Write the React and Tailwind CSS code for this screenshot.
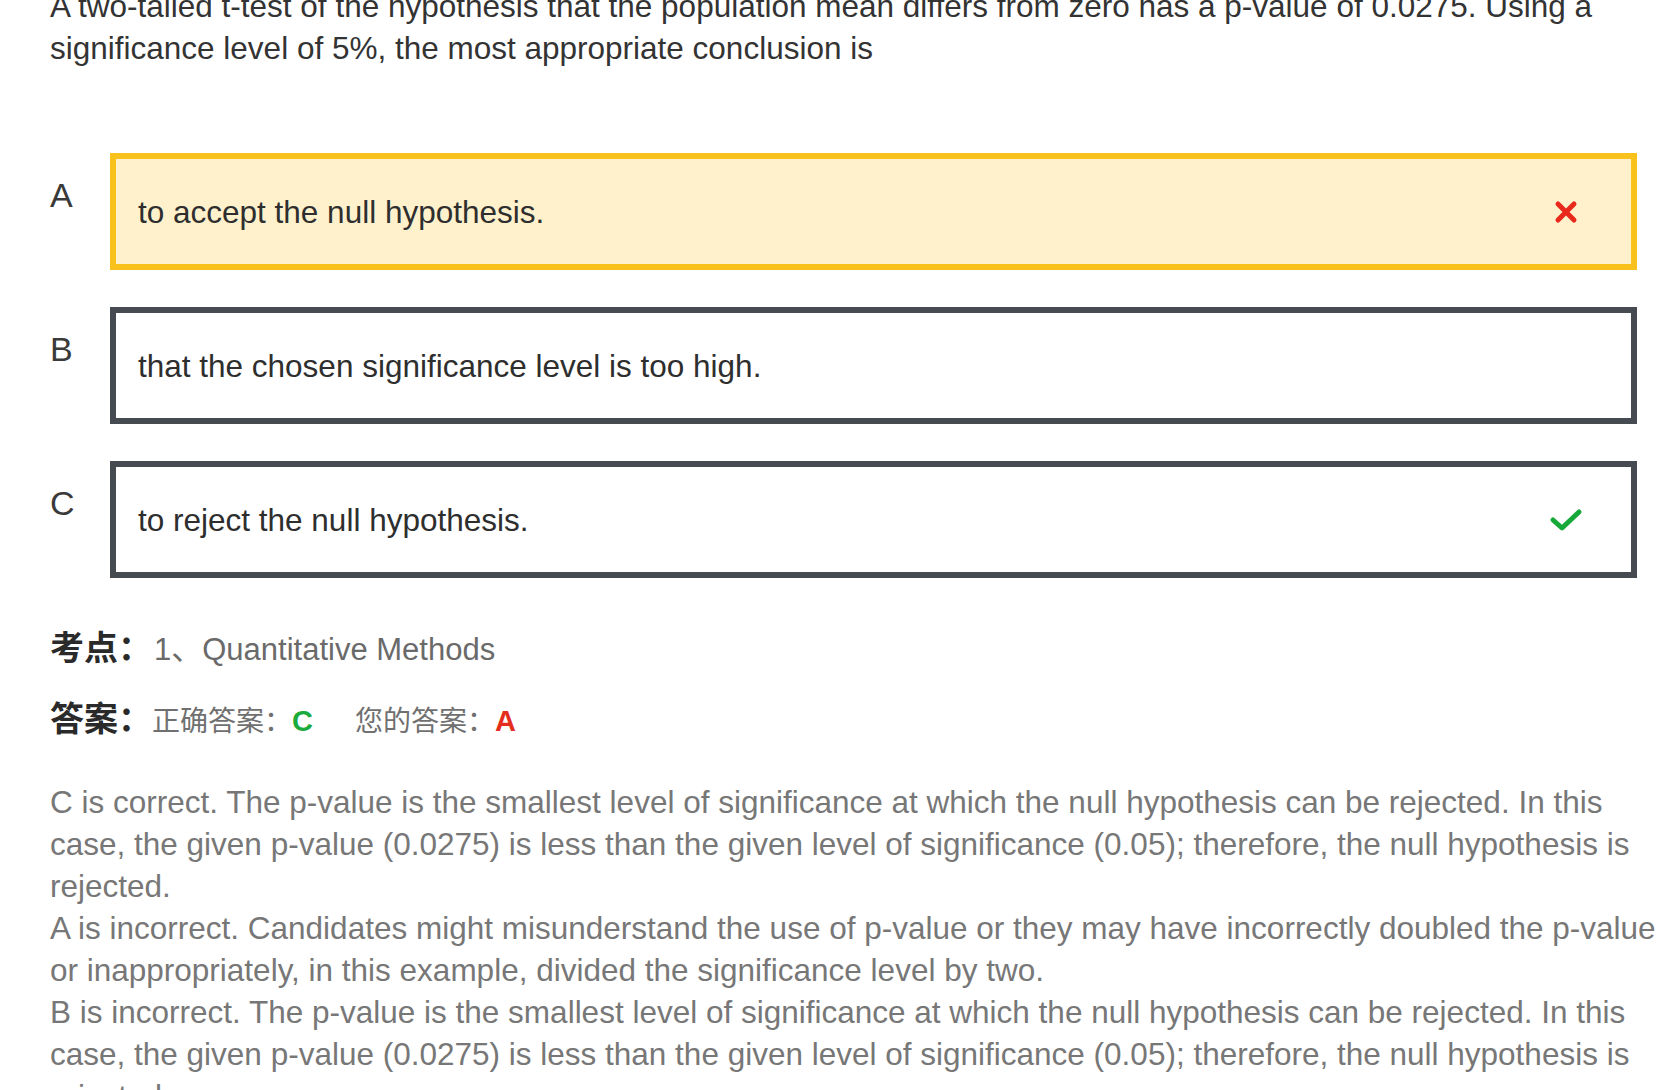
import React from 'react';

const options = [
  { key: 'A', text: 'to accept the null hypothesis.', state: 'wrong' },
  { key: 'B', text: 'that the chosen significance level is too high.', state: 'none' },
  { key: 'C', text: 'to reject the null hypothesis.', state: 'right' },
];

// lines copied as they wrap in the source page
const explanation = [
  'C is correct. The p-value is the smallest level of significance at which the null hypothesis can be rejected. In this',
  'case, the given p-value (0.0275) is less than the given level of significance (0.05); therefore, the null hypothesis is',
  'rejected.',
  'A is incorrect. Candidates might misunderstand the use of p-value or they may have incorrectly doubled the p-value',
  'or inappropriately, in this example, divided the significance level by two.',
  'B is incorrect. The p-value is the smallest level of significance at which the null hypothesis can be rejected. In this',
  'case, the given p-value (0.0275) is less than the given level of significance (0.05); therefore, the null hypothesis is',
  'rejected.',
];

function CrossIcon() {
  return (
    <svg width="24" height="24" viewBox="0 0 24 24" aria-hidden="true">
      <path d="M4 4L20 20M20 4L4 20" stroke="#e8291c" strokeWidth="5" strokeLinecap="round" />
    </svg>
  );
}

function CheckIcon() {
  return (
    <svg width="34" height="28" viewBox="0 0 34 28" aria-hidden="true">
      <path d="M4 14L13 22L30 6" fill="none" stroke="#17a83a" strokeWidth="5" strokeLinecap="round" strokeLinejoin="round" />
    </svg>
  );
}

function Option({ opt }) {
  const wrong = opt.state === 'wrong';
  return (
    <div className="flex">
      <div className="w-[60px] shrink-0 pt-[25px] text-[34px] leading-none text-[#3a3a3a]">{opt.key}</div>
      <div
        className={
          wrong
            ? 'flex h-[117px] w-[1527px] shrink-0 items-center justify-between border-[6px] border-[#f8c11b] bg-[#fff1cc] pl-[22px] pr-[48px]'
            : 'flex h-[117px] w-[1527px] shrink-0 items-center justify-between border-[6px] border-[#464b52] bg-white pl-[22px] pr-[48px]'
        }
      >
        <span className="text-[31.5px] leading-[42px] text-[#2e2e2e]">{opt.text}</span>
        <span className="flex w-[34px] justify-center">
          {opt.state === 'wrong' && <CrossIcon />}
          {opt.state === 'right' && <CheckIcon />}
        </span>
      </div>
    </div>
  );
}

export default function App() {
  return (
    <div className="h-[1090px] w-[1660px] overflow-hidden bg-white font-['Liberation_Sans','Noto_Sans_CJK_SC',sans-serif]">
      <div className="-mt-[15px] pl-[50px]">
        <p className="whitespace-nowrap text-[31.5px] leading-[42px] text-[#333]">
          <span className="block">
            A two-tailed t-test of the hypothesis that the population mean differs from zero has a p-value of 0.0275. Using a
          </span>
          <span className="block">significance level of 5%, the most appropriate conclusion is</span>
        </p>

        <div className="mt-[84px] flex flex-col gap-[37px]">
          {options.map((opt) => (
            <Option key={opt.key} opt={opt} />
          ))}
        </div>

        <div className="mt-[49px] flex items-baseline leading-[42px]">
          <span className="text-[34px] font-bold text-[#2a2a2a]">考点：</span>
          <span className="ml-[2px] text-[31px] text-[#6a6a6a]">1、Quantitative Methods</span>
        </div>

        <div className="mt-[27px] flex items-baseline leading-[42px]">
          <span className="text-[34px] font-bold text-[#2a2a2a]">答案：</span>
          <span className="text-[28px] text-[#707070]">正确答案：</span>
          <span className="text-[29px] font-bold text-[#1bab3c]">C</span>
          <span className="ml-[42px] text-[28px] text-[#707070]">您的答案：</span>
          <span className="text-[29px] font-bold text-[#e42d1d]">A</span>
        </div>

        <div className="mt-[38px] whitespace-nowrap text-[31.5px] leading-[42px] text-[#777]">
          {explanation.map((line, i) => (
            <span key={i} className="block">
              {line}
            </span>
          ))}
        </div>
      </div>
    </div>
  );
}
